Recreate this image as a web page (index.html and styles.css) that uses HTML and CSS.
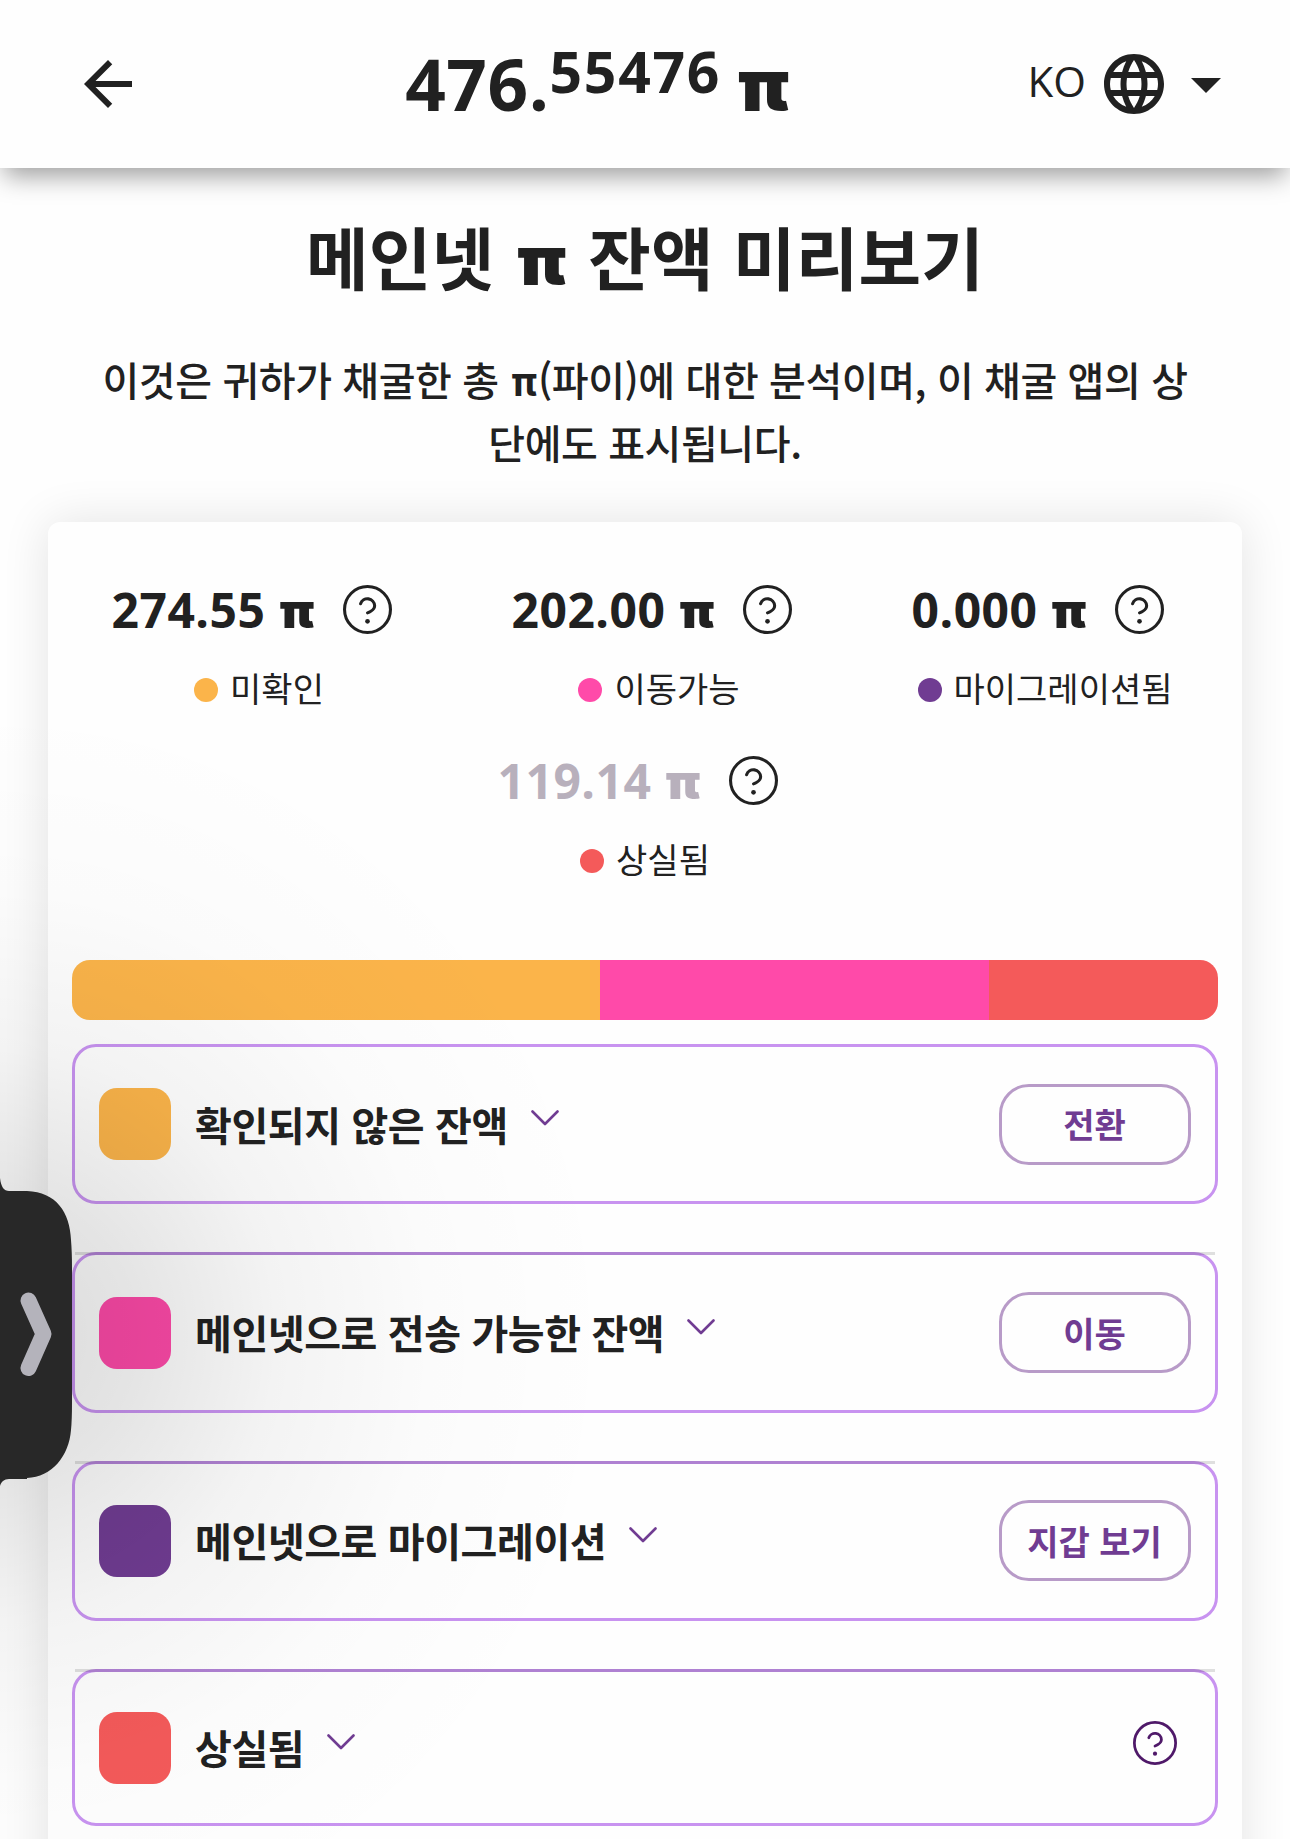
FILE: index.html
```html
<!DOCTYPE html>
<html lang="ko">
<head>
    <meta charset="UTF-8">
    <meta name="viewport" content="width=device-width, initial-scale=1.0">
    <title>메인넷 π 잔액 미리보기</title>
    <link rel="stylesheet" href="styles.css">
</head>
<body>
    <svg width="0" height="0" class="sprite">
        <symbol id="help" viewBox="0 0 48 48">
            <circle cx="24" cy="24" r="22.5" fill="none" stroke="currentColor" stroke-width="3"/>
            <path d="M17.2 18.3a7.1 7.1 0 0 1 13.8 2c0 4.6-7 7-7 7" fill="none" stroke="currentColor" stroke-width="3" stroke-linecap="round"/>
            <circle cx="24" cy="35.6" r="2.3" fill="currentColor"/>
        </symbol>
        <symbol id="chevron" viewBox="0 0 28 16">
            <path d="M1.5 1.5L14 14L26.5 1.5" fill="none" stroke="currentColor" stroke-width="2.6" stroke-linecap="round" stroke-linejoin="round"/>
        </symbol>
    </svg>

    <header class="header">
        <svg class="icon" viewBox="0 0 24 24"><path d="M20 11H7.83l5.59-5.59L12 4l-8 8 8 8 1.41-1.41L7.83 13H20v-2z"/></svg>
        <div class="balance"><span class="whole">476.</span><span class="fraction">55476</span><span class="pi">π</span></div>
        <div class="language">
            <span class="code">KO</span>
            <svg class="icon" viewBox="0 0 24 24"><path d="M11.99 2C6.47 2 2 6.48 2 12s4.47 10 9.99 10C17.52 22 22 17.52 22 12S17.52 2 11.99 2zm6.93 6h-2.95c-.32-1.25-.78-2.45-1.38-3.56 1.84.63 3.37 1.91 4.33 3.56zM12 4.04c.83 1.2 1.48 2.53 1.91 3.96h-3.82c.43-1.43 1.08-2.76 1.91-3.96zM4.26 14C4.1 13.36 4 12.69 4 12s.1-1.36.26-2h3.38c-.08.66-.14 1.32-.14 2s.06 1.34.14 2H4.26zm.82 2h2.95c.32 1.25.78 2.45 1.38 3.56-1.84-.63-3.37-1.9-4.33-3.56zm2.95-8H5.08c.96-1.66 2.49-2.93 4.33-3.56C8.81 5.55 8.35 6.75 8.03 8zM12 19.96c-.83-1.2-1.48-2.53-1.91-3.96h3.82c-.43 1.43-1.08 2.76-1.91 3.96zM14.34 14H9.66c-.09-.66-.16-1.32-.16-2s.07-1.35.16-2h4.68c.09.65.16 1.32.16 2s-.07 1.34-.16 2zm.25 5.56c.6-1.11 1.06-2.31 1.38-3.56h2.95c-.96 1.65-2.49 2.93-4.33 3.56zM16.36 14c.08-.66.14-1.32.14-2s-.06-1.34-.14-2h3.38c.16.64.26 1.31.26 2s-.1 1.36-.26 2h-3.38z"/></svg>
            <svg class="icon" viewBox="0 0 24 24"><path d="M7 10l5 5 5-5z"/></svg>
        </div>
    </header>

    <main>
        <h1>메인넷 <span class="pi">π</span> 잔액 미리보기</h1>
        <p class="intro">이것은 귀하가 채굴한 총 <span class="pi">π</span>(파이)에 대한 분석이며, 이 채굴 앱의 상<br>단에도 표시됩니다.</p>

        <section class="card">
            <div class="stats">
                <div class="stat">
                    <div class="value"><span class="number">274.55</span><span class="pi">π</span><svg class="help"><use href="#help"/></svg></div>
                    <div class="label"><i class="dot orange"></i>미확인</div>
                </div>
                <div class="stat">
                    <div class="value"><span class="number">202.00</span><span class="pi">π</span><svg class="help"><use href="#help"/></svg></div>
                    <div class="label"><i class="dot pink"></i>이동가능</div>
                </div>
                <div class="stat">
                    <div class="value"><span class="number">0.000</span><span class="pi">π</span><svg class="help"><use href="#help"/></svg></div>
                    <div class="label"><i class="dot purple"></i>마이그레이션됨</div>
                </div>
                <div class="stat lost">
                    <div class="value"><span class="number">119.14</span><span class="pi">π</span><svg class="help"><use href="#help"/></svg></div>
                    <div class="label"><i class="dot red"></i>상실됨</div>
                </div>
            </div>

            <div class="bar">
                <div class="orange" style="flex-grow: 274.55"></div>
                <div class="pink" style="flex-grow: 202"></div>
                <div class="red" style="flex-grow: 119.14"></div>
            </div>

            <div class="row">
                <i class="swatch orange"></i>
                <span class="name">확인되지 않은 잔액</span>
                <svg class="chevron"><use href="#chevron"/></svg>
                <button class="btn">전환</button>
            </div>
            <div class="row">
                <i class="swatch pink"></i>
                <span class="name">메인넷으로 전송 가능한 잔액</span>
                <svg class="chevron"><use href="#chevron"/></svg>
                <button class="btn">이동</button>
            </div>
            <div class="row">
                <i class="swatch purple"></i>
                <span class="name">메인넷으로 마이그레이션</span>
                <svg class="chevron"><use href="#chevron"/></svg>
                <button class="btn">지갑 보기</button>
            </div>
            <div class="row last">
                <i class="swatch red"></i>
                <span class="name">상실됨</span>
                <svg class="chevron"><use href="#chevron"/></svg>
                <svg class="help"><use href="#help"/></svg>
            </div>
        </section>
    </main>

    <!-- drawer handle at the screen edge -->
    <div class="shade"></div>
    <svg class="handle" viewBox="0 0 72 312">
        <path d="M0 0C1 9 4 13 9 13H27C56 14 70 34 71 62Q72 74 72 90V224Q72 242 71 252C69 278 52 299 27 300V301H9C4 301 1 304 0 308Z" fill="#282828"/>
        <path d="M28.5 122.5L43.5 156L28.5 190" fill="none" stroke="#b4b3bb" stroke-width="16" stroke-linecap="round" stroke-linejoin="round"/>
    </svg>
</body>
</html>
```
FILE: styles.css
```css
* {
    box-sizing: border-box;
}
body {
    margin: 0;
    height: 1839px;
    position: relative;
    overflow: hidden;
    background: #fefefe;
    color: #212121;
    font-family: "Noto Sans CJK KR", sans-serif;
}
svg {
    display: block;
    flex: none;
}
.sprite {
    position: absolute;
}
.pi {
    display: inline-block;
    font-family: Inter, sans-serif;
    font-weight: 900;
    line-height: 1;
    letter-spacing: 0;
    transform: scaleX(1.09);
}
.orange {
    background: #fbb44a;
}
.pink {
    background: #ff4aa9;
}
.purple {
    background: #703c92;
}
.red {
    background: #f45a5a;
}

/* header */
.header {
    display: flex;
    align-items: center;
    justify-content: space-between;
    height: 168px;
    padding: 0 48px 0 72px;
    background: #fefefe;
    box-shadow: 0 12px 24px -4px rgba(0, 0, 0, 0.38);
}
.icon {
    width: 72px;
    height: 72px;
    fill: #212121;
}
.balance {
    display: flex;
    align-items: baseline;
    height: 168px;
    margin-left: 21px;
    line-height: 168px;
    font-family: "Open Sans", sans-serif;
    font-weight: 700;
}
.whole {
    font-size: 71px;
    letter-spacing: 0.6px;
}
.fraction {
    font-size: 57px;
    letter-spacing: 1.7px;
    position: relative;
    top: -18px;
}
.balance .pi {
    margin-left: 19px;
    font-size: 71px;
}
.language {
    display: flex;
    align-items: center;
}
.code {
    margin: 0 12px 7px 0;
    font-family: "Open Sans", sans-serif;
    font-size: 42px;
    line-height: 60px;
}

/* intro */
h1 {
    margin: 42px 0 0;
    font-size: 68px;
    font-weight: 700;
    line-height: 92px;
    letter-spacing: 0.2px;
    text-align: center;
    white-space: nowrap;
}
h1 .pi {
    margin: 0 5px;
}
.intro {
    margin: 46px 0 0;
    font-size: 40px;
    font-weight: 500;
    line-height: 63px;
    letter-spacing: -0.42px;
    text-align: center;
    white-space: nowrap;
}
.intro .pi {
    margin: 0 1px 0 2px;
    font-weight: 700;
    transform: none;
}

/* card */
.card {
    height: 1400px;
    margin: 48px 48px 0;
    padding: 50px 24px 0;
    border-radius: 12px;
    background: #fefefe;
    box-shadow: 0 0 48px rgba(0, 0, 0, 0.11);
}
.stats {
    display: grid;
    grid-template-columns: 400px 400px 372px;
    grid-auto-rows: 171px;
    margin-left: -17px;
    height: 388px;
}
.stat {
    display: flex;
    flex-direction: column;
    align-items: center;
}
.value {
    display: flex;
    align-items: baseline;
    height: 75px;
    margin-right: 6px;
    font-family: "Open Sans", sans-serif;
    font-size: 48px;
    font-weight: 700;
    line-height: 75px;
}
.number {
    letter-spacing: 0.5px;
}
.value .pi {
    width: 35px;
    margin-left: 16px;
}
.value .help {
    align-self: center;
    width: 49px;
    height: 49px;
    margin-left: 27px;
}
.label {
    display: flex;
    align-items: center;
    height: 75px;
    margin-left: 8px;
    padding-top: 6px;
    font-size: 34px;
    font-weight: 400;
    white-space: nowrap;
}
.dot {
    width: 24px;
    height: 24px;
    margin: 5px 12px 0 0;
    border-radius: 50%;
}
.lost {
    grid-column: 1 / 4;
}
.lost .number,
.lost .pi {
    color: #b8b0bc;
}
.bar {
    display: flex;
    height: 60px;
    margin-bottom: 24px;
    border-radius: 18px;
    overflow: hidden;
}

/* rows */
.row {
    position: relative;
    display: flex;
    align-items: center;
    height: 160.4px;
    margin-bottom: 48px;
    padding: 0 24px;
    border: 3px solid #c893f0;
    border-radius: 24px;
}
.row + .row::before {
    content: "";
    position: absolute;
    top: -3px;
    left: 0;
    right: 0;
    height: 3px;
    background: rgba(0, 0, 0, 0.12);
}
.swatch {
    width: 72px;
    height: 72px;
    border-radius: 18px;
}
.name {
    margin-left: 24px;
    padding-bottom: 1px;
    font-size: 40px;
    font-weight: 700;
    line-height: 60px;
    letter-spacing: -0.4px;
    white-space: nowrap;
}
.chevron {
    width: 28px;
    height: 16px;
    margin: 0 auto 12px 23px;
    color: #703c92;
}
.btn {
    width: 192px;
    height: 81px;
    padding: 0 1px 1px 0;
    border: 3px solid #b89bc8;
    border-radius: 30px;
    background: none;
    color: #703c92;
    font-family: inherit;
    font-size: 34px;
    font-weight: 700;
}
.last {
    height: 157px;
}
.last .help {
    width: 44px;
    height: 44px;
    margin: 0 14px 9px 0;
    color: #4f1969;
}

/* edge handle */
.shade {
    position: absolute;
    inset: 0;
    background: radial-gradient(620px 640px at 0 1335px, rgba(0, 0, 0, 0.14) 0%, rgba(0, 0, 0, 0.1) 22%, rgba(0, 0, 0, 0.042) 45%, rgba(0, 0, 0, 0.012) 70%, transparent 100%);
    pointer-events: none;
}
.handle {
    position: absolute;
    left: 0;
    top: 1178px;
    width: 72px;
    height: 312px;
}
```
